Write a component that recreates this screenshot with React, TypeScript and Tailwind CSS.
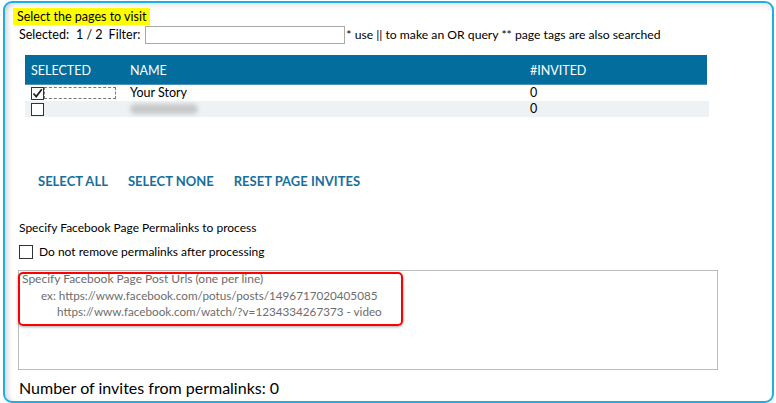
import React from 'react';

const font = { fontFamily: '"Segoe UI", Lato, "Liberation Sans", sans-serif' };

const App: React.FC = () => {
  return (
    <div className="w-[776px] h-[403px] bg-white overflow-hidden text-black" style={font}>
      <div className="ml-[3px] mt-[1px] w-[771px] h-[402px] rounded-[9px] border-2 border-[#1eaee6] bg-white shadow-[inset_6px_0_6px_-4px_rgba(0,0,0,0.18),inset_0_6px_6px_-4px_rgba(0,0,0,0.12)] overflow-hidden">
        <div className="pl-[8px] pt-[5px]">
          {/* Title */}
          <div className="w-fit bg-[#ffff00] px-[4px] h-[17px] leading-[17px] text-[12.5px]">
            Select the pages to visit
          </div>

          {/* Filter row */}
          <div className="flex items-center h-[20px] pl-[6px] text-[12.5px] leading-[20px]">
            <span>Selected:</span>
            <span className="ml-[7px]">1 / 2</span>
            <span className="ml-[6px]">Filter:</span>
            <input className="ml-[5px] w-[200px] h-[18px] border border-[#a9a9a9] bg-white outline-none" />
            <span className="ml-[1px] text-[12.2px]">* use || to make an OR query ** page tags are also searched</span>
          </div>

          {/* Table */}
          <div className="ml-[12px] mt-[10px] w-[684px] text-[12.5px]">
            <div className="flex items-center h-[30px] pt-[3px] bg-[#036e9d] text-white border-b border-[#4a93b7] mr-[2px]">
              <span className="w-[105px] pl-[6px] text-[12.5px]">SELECTED</span>
              <span className="w-[400px] text-[12.5px]">NAME</span>
              <span className="text-[12.5px]">#INVITED</span>
            </div>
            <div className="flex items-center h-[16px]">
              <div className="w-[105px] pl-[6px] flex items-center">
                <div className="w-[13px] h-[13px] border border-[#333] bg-white flex items-center justify-center">
                  <svg width="11" height="11" viewBox="0 0 11 11">
                    <path d="M1.5 5.5 L4.2 8.5 L9.8 1.2" fill="none" stroke="#222" strokeWidth="1.8" />
                  </svg>
                </div>
                <div className="w-[72px] h-[12px] border border-dashed border-[#777]" />
              </div>
              <span className="w-[400px]">Your Story</span>
              <span>0</span>
            </div>
            <div className="flex items-center h-[16px] bg-[#edf3f5]">
              <div className="w-[105px] pl-[6px]">
                <div className="w-[13px] h-[13px] border border-[#333] bg-white" />
              </div>
              <span className="w-[400px] flex items-center">
                <span className="inline-block w-[68px] h-[10px] bg-[#c8c8c8] rounded-[5px] blur-[2px]" />
              </span>
              <span>0</span>
            </div>
          </div>

          {/* Action links */}
          <div className="flex items-center gap-[20px] ml-[25px] mt-[55px] h-[18px] leading-[18px] text-[13px] font-bold text-[#17709b]">
            <span>SELECT ALL</span>
            <span>SELECT NONE</span>
            <span>RESET PAGE INVITES</span>
          </div>

          {/* Permalinks */}
          <div className="ml-[6px] mt-[29px] h-[17px] leading-[17px] text-[12px]">
            Specify Facebook Page Permalinks to process
          </div>
          <div className="flex items-center ml-[6px] mt-[9px] h-[14px] text-[12px]">
            <div className="w-[14px] h-[14px] border border-[#333] bg-white" />
            <span className="ml-[6px]">Do not remove permalinks after processing</span>
          </div>

          <div className="relative ml-[5px] mt-[11px] w-[700px] h-[100px] border border-[#bdbdbd] bg-white">
            <div className="pl-[3px] text-[12px] leading-[16px] text-[#6d6d6d]">
              <div>Specify Facebook Page Post Urls (one per line)</div>
              <div className="pl-[19px] text-[11.7px]">ex: https://www.facebook.com/potus/posts/1496717020405085</div>
              <div className="pl-[35px] text-[11.7px]">https://www.facebook.com/watch/?v=1234334267373 - video</div>
            </div>
            <div className="absolute left-[-1px] top-[1px] w-[385px] h-[54px] rounded-[5px] border-2 border-[#ff0000] shadow-[0_1px_3px_rgba(0,0,0,0.35)]" />
          </div>

          <div className="ml-[6px] mt-[8px] h-[20px] leading-[20px] text-[16px]">Number of invites from permalinks: 0</div>
        </div>
      </div>
    </div>
  );
};

export default App;
